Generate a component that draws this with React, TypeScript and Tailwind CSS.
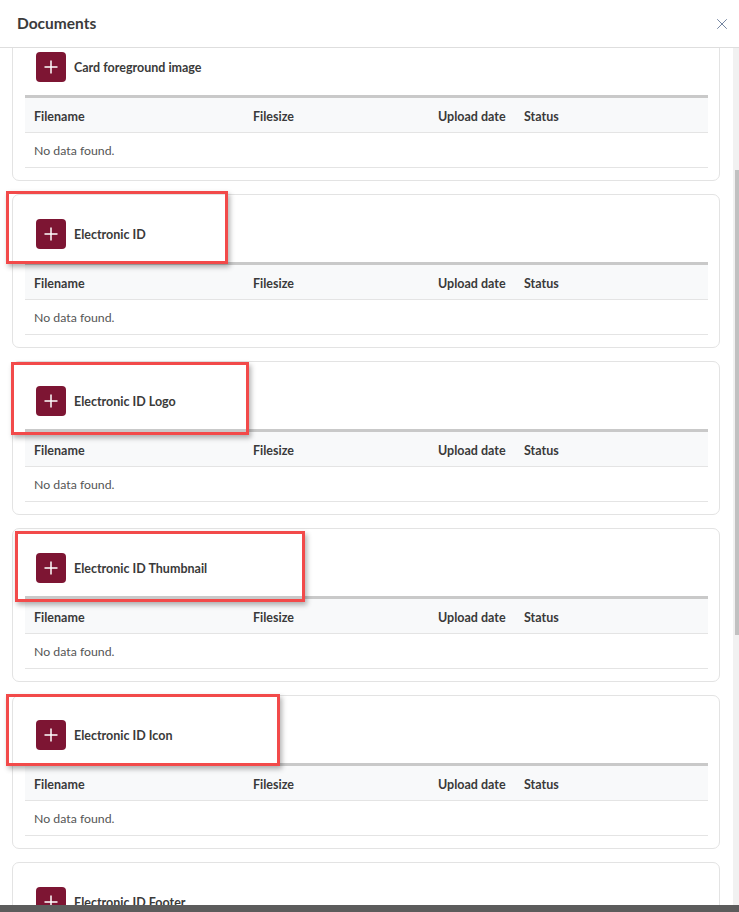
import { X } from 'lucide-react';

const sections = [
  'Card foreground image',
  'Electronic ID',
  'Electronic ID Logo',
  'Electronic ID Thumbnail',
  'Electronic ID Icon',
  'Electronic ID Footer',
];

// annotation boxes drawn over the screenshot
const highlights = [
  { left: 6, top: 191, width: 222, height: 73 },
  { left: 11, top: 362, width: 238, height: 73 },
  { left: 15, top: 531, width: 290, height: 71 },
  { left: 6, top: 694, width: 274, height: 72 },
];

const AddButton = () => (
  <button className="flex h-[30px] w-[30px] items-center justify-center rounded-[4px] bg-[#7d1533]">
    <svg width="16" height="16" viewBox="0 0 16 16" fill="none">
      <path d="M8 1.5v13M1.5 8h13" stroke="white" strokeWidth="1.5" />
    </svg>
  </button>
);

const DocumentSection = ({ title }: { title: string }) => (
  <div className="rounded-[7px] border border-[#e3e3e3] bg-white pb-[12px] pl-[12px] pr-[11px] pt-[24px]">
    <div className="ml-[11px] flex items-center gap-[8px]">
      <AddButton />
      <span className="mt-[3px] text-[12.5px] font-bold text-[#3a3a3a]">{title}</span>
    </div>
    <div className="mt-[13px] text-[12.3px]">
      <div className="grid h-[38px] grid-cols-[219px_185px_86px_1fr] items-center border-t-[3px] border-b border-t-[#c9c9c9] border-b-[#e4e4e4] bg-[#f8f9fa] pt-[4px] text-[12.5px] font-bold text-[#3a3a3a]">
        <div className="pl-[9px]">Filename</div>
        <div className="pl-[9px]">Filesize</div>
        <div className="pl-[9px]">Upload date</div>
        <div className="pl-[9px]">Status</div>
      </div>
      <div className="flex h-[35px] items-center border-b border-[#e4e4e4] pl-[9px] pt-[3px] text-[#555]">
        No data found.
      </div>
    </div>
  </div>
);

const App = () => {
  return (
    <div
      className="relative flex h-[912px] w-[739px] flex-col overflow-hidden bg-white"
      style={{ fontFamily: 'Lato, "Noto Sans", sans-serif' }}
    >
      <div className="flex h-[48px] shrink-0 items-center justify-between border-b border-[#dedede] pl-[17px] pr-[8px]">
        <h2 className="text-[15.5px] font-bold text-[#3b3b3b]">Documents</h2>
        <X className="h-[18px] w-[18px] text-[#71839e]" strokeWidth={1.3} />
      </div>

      <div className="flex min-h-0 flex-1">
        <div className="min-w-0 flex-1 overflow-hidden pl-[12px] pr-[13px]">
          <div className="-mt-[21px] flex flex-col gap-[13px]">
            {sections.map((s) => (
              <DocumentSection key={s} title={s} />
            ))}
          </div>
        </div>
        <div className="w-[6px] shrink-0 bg-[#f1f1f1]">
          <div className="ml-[2px] mt-[122px] h-[465px] bg-[#c1c1c1]" />
        </div>
      </div>

      <div className="h-[7px] shrink-0 bg-[#5c5c5c]" />

      {highlights.map((h, i) => (
        <div
          key={i}
          className="pointer-events-none absolute border-[3px] border-[#f24a4a] shadow-[2px_3px_5px_rgba(0,0,0,0.3)]"
          style={{ left: h.left, top: h.top, width: h.width, height: h.height }}
        />
      ))}
    </div>
  );
};

export default App;
